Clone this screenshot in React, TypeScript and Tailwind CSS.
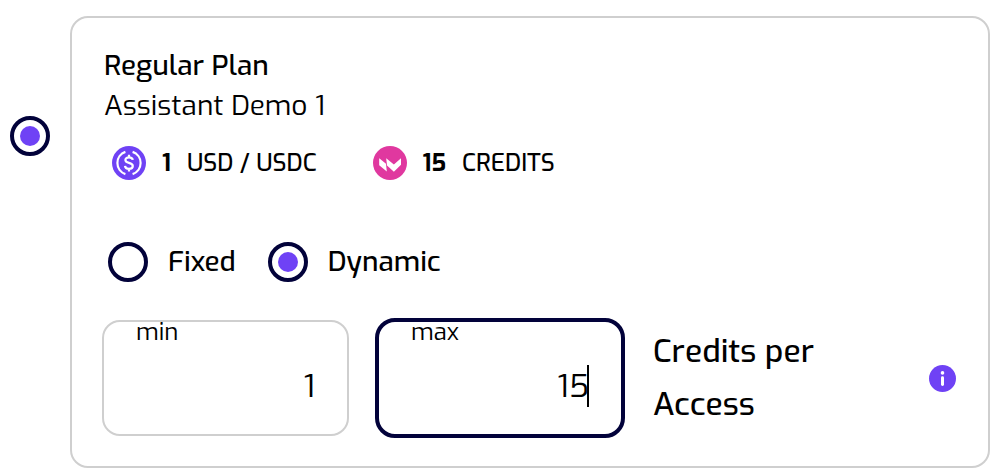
import { useState } from 'react';

type RadioProps = {
  name: string;
  label: string;
  checked: boolean;
  onChange: () => void;
  hideLabel?: boolean;
};

function Radio({ name, label, checked, onChange, hideLabel = false }: RadioProps) {
  return (
    <label className="flex shrink-0 items-center gap-5 text-[28px] leading-10 font-medium">
      <input
        type="radio"
        name={name}
        aria-label={label}
        checked={checked}
        onChange={onChange}
        className="grid size-10 shrink-0 appearance-none place-items-center rounded-full border-4 border-[#02023a] bg-white before:size-5 before:rounded-full before:bg-[#6f42f5] before:opacity-0 before:content-[''] checked:before:opacity-100"
      />
      {!hideLabel && <span>{label}</span>}
    </label>
  );
}

function UsdcIcon() {
  return (
    <svg viewBox="0 0 34 34" className="size-[34px] shrink-0" fill="none" aria-hidden="true">
      <circle cx="17" cy="17" r="17" fill="#6f42f5" />
      <g stroke="#fff" strokeWidth="2.2">
        <path d="M13.4 5.9A11.7 11.7 0 0 0 13.4 28.1M20.6 5.9A11.7 11.7 0 0 1 20.6 28.1" />
        <path d="M20.8 13.9C20.5 12.2 19.2 11.3 17 11.3C14.8 11.3 13.4 12.3 13.4 14C13.4 18 20.8 15.7 20.8 20C20.8 21.8 19.3 22.8 17 22.8C14.7 22.8 13.2 21.8 13 19.9M17 8.8V11.3M17 22.8V25.4" />
      </g>
    </svg>
  );
}

function CreditsIcon() {
  return (
    <svg viewBox="0 0 34 34" className="size-[34px] shrink-0" aria-hidden="true">
      <circle cx="17" cy="17" r="17" fill="#e0389f" />
      <path
        fill="#fff"
        d="M6.2 12.2L13 17.8L13.8 25.6L6.2 19.2ZM13.2 12.2L20.9 18.4L28 12.2V18.8L20.9 25.8L14 19.4Z"
      />
    </svg>
  );
}

function InfoIcon() {
  return (
    <svg viewBox="0 0 27 27" className="size-[27px]" aria-hidden="true">
      <circle cx="13.5" cy="13.5" r="13.5" fill="#6f42f5" />
      <circle cx="13.5" cy="7.9" r="1.8" fill="#fff" />
      <rect x="12" y="11.2" width="3" height="9.8" rx="1.4" fill="#fff" />
    </svg>
  );
}

type FieldProps = {
  label: string;
  value: string;
  onChange: (value: string) => void;
  active?: boolean;
};

function Field({ label, value, onChange, active = false }: FieldProps) {
  return (
    <label
      className={
        active
          ? 'relative flex h-[120px] w-[250px] flex-col rounded-[20px] border-4 border-[#02023a] px-8'
          : 'relative flex h-[116px] w-[247px] flex-col rounded-[18px] border-2 border-[#cfcfcf] px-8'
      }
    >
      <span className="text-2xl leading-5">{label}</span>
      <input
        type="text"
        inputMode="numeric"
        value={value}
        onChange={(e) => onChange(e.target.value)}
        className="mt-5 h-12 w-full min-w-0 bg-transparent text-right text-[32px] leading-[48px] caret-transparent outline-none"
      />
      {active && <span className="absolute top-[43px] right-8 h-[42px] w-0.5 bg-black" />}
    </label>
  );
}

export default function App() {
  const [selected, setSelected] = useState(true);
  const [mode, setMode] = useState('dynamic');
  const [min, setMin] = useState('1');
  const [max, setMax] = useState('15');

  return (
    <main className="flex bg-white px-2.5 pt-4 pb-1.5 font-[Exo,'Exo_2',Roboto,sans-serif] text-black">
      <div className="pt-[100px]">
        <Radio name="plan" label="Regular Plan" hideLabel checked={selected} onChange={() => setSelected(true)} />
      </div>
      <section className="ml-5 min-w-0 flex-1 rounded-[18px] border-2 border-[#cfcfcf] pt-7 pr-8 pb-7 pl-[30px]">
        <h2 className="pl-0.5 text-[28px] leading-10 font-medium">Regular Plan</h2>
        <p className="pl-0.5 text-[28px] leading-10 font-normal">Assistant Demo 1</p>

        <div className="mt-[19px] flex items-center gap-14 pl-2.5 text-2xl leading-9 font-medium">
          <div className="flex items-center gap-4">
            <UsdcIcon />
            <b>1</b>
            <span>USD / USDC</span>
          </div>
          <div className="flex items-center gap-4">
            <CreditsIcon />
            <b>15</b>
            <span>CREDITS</span>
          </div>
        </div>

        <div className="mt-[61px] flex items-center gap-8 pl-1.5">
          <Radio name="mode" label="Fixed" checked={mode === 'fixed'} onChange={() => setMode('fixed')} />
          <Radio name="mode" label="Dynamic" checked={mode === 'dynamic'} onChange={() => setMode('dynamic')} />
        </div>

        <div className="mt-9 flex items-center">
          <Field label="min" value={min} onChange={setMin} />
          <div className="ml-[26px]">
            <Field label="max" value={max} onChange={setMax} active />
          </div>
          <p className="ml-7 w-44 text-[32px] leading-[53px] font-medium">Credits per Access</p>
          <button type="button" aria-label="About credits per access" className="ml-auto">
            <InfoIcon />
          </button>
        </div>
      </section>
    </main>
  );
}
